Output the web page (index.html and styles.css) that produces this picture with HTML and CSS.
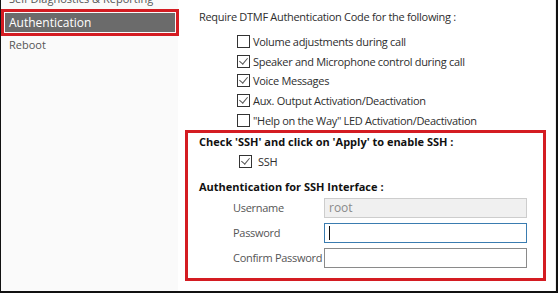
FILE: index.html
```html
<!DOCTYPE html>
<html lang="en">
<head>
  <meta charset="UTF-8" />
  <title>Authentication</title>
  <link rel="stylesheet" href="styles.css">
</head>
<body>
  <div class="frame">
    <ul class="nav">
      <li class="nav-item cut">Self Diagnostics &amp; Reporting</li>
      <li class="nav-item active"><span>Authentication</span></li>
      <li class="nav-item">Reboot</li>
    </ul>

    <div class="main">
      <p class="lead">Require DTMF Authentication Code for the following :</p>
      <ul class="checks">
        <li><span class="box"></span>Volume adjustments during call</li>
        <li><span class="box on"></span>Speaker and Microphone control during call</li>
        <li><span class="box on"></span>Voice Messages</li>
        <li><span class="box on"></span>Aux. Output Activation/Deactivation</li>
        <li><span class="box"></span>"Help on the Way" LED Activation/Deactivation</li>
      </ul>

      <div class="ssh">
        <p class="heading">Check 'SSH' and click on 'Apply' to enable SSH :</p>
        <div class="ssh-check"><span class="box on"></span>SSH</div>
        <p class="heading">Authentication for SSH Interface :</p>
        <div class="fields">
          <label>Username</label>
          <input type="text" value="root" disabled>
          <label>Password</label>
          <div class="input focus"><span class="caret"></span></div>
          <label>Confirm Password</label>
          <input type="text">
        </div>
      </div>
    </div>
  </div>
</body>
</html>
```

FILE: styles.css
```css
*, *::before, *::after { box-sizing: border-box; }
body {
  margin: 0;
  font-family: 'Open Sans', 'Noto Sans', sans-serif;
  font-size: 11px;
  letter-spacing: -0.3px;
  color: #2e2e2e;
  background: #fff;
}
ul, p { margin: 0; padding: 0; list-style: none; }

.frame {
  display: flex;
  width: 558px; height: 293px;
  border-left: 1px solid #111;
  border-right: 2px solid #111;
  border-bottom: 2px solid #111;
  overflow: hidden;
}

/* sidebar */
.nav {
  width: 177px; flex: none;
  background: #fafafa;
  color: #555;
  letter-spacing: 0;
}
.nav-item { height: 20px; line-height: 20px; padding-left: 8px; }
.nav-item.cut { margin-top: -11px; height: 20px; }
.nav-item.active {
  width: 178px; height: 27px;
  padding: 1px;
  border: 3px solid #d41c22;
  line-height: 19px;
}
.nav-item.active span {
  display: block; height: 19px;
  background: #6b6b6b; color: #fff;
  padding-left: 4px;
  font-size: 12px;
}
.nav-item:last-child { line-height: 17px; }

/* content */
.main {
  flex: 1;
  padding: 9px 0 0 21px;
  border-right: 1px solid #ececec;
}
.lead { line-height: 16px; }
.checks { margin: 7px 0 0 38px; }
.checks li { display: flex; align-items: center; height: 19.6px; }
.box {
  width: 13px; height: 13px; flex: none;
  border: 1px solid #333;
  background: #fff;
  margin-right: 3px;
  position: relative;
}
.box.on::after {
  content: '';
  position: absolute; left: 3px; top: 0;
  width: 5px; height: 8px;
  border-right: 1.3px solid #555;
  border-bottom: 1.3px solid #555;
  transform: rotate(40deg);
}

.ssh {
  margin: 0 0 0 -14px;
  width: 361px; height: 151px;
  border: 3px solid #d41c22;
  padding: 1px 0 0 11px;
}
.heading { font-weight: 700; color: #111; line-height: 16px; letter-spacing: 0; }
.ssh-check { display: flex; align-items: center; height: 24px; margin-left: 40px; }
.ssh-check .box { margin-right: 6px; }
.ssh-check + .heading { margin-top: 5px; }

.fields {
  display: grid;
  grid-template-columns: 91px 203px;
  row-gap: 5px;
  margin: 3px 0 0 34px;
  align-items: center;
}
.fields label { color: #555; white-space: nowrap; }
.fields input, .fields .input {
  height: 20px; width: 203px;
  margin: 0; padding: 0 4px;
  border: 1px solid #8a8a8a;
  font: inherit; font-size: 12px;
  background: #fff;
}
.fields input:disabled {
  background: #f0f0f0;
  border-color: #cdcdcd;
  color: #8a8a8a;
}
.fields .input.focus {
  border-color: #3a7cb0;
  display: flex; align-items: center;
}
.caret { width: 1px; height: 14px; background: #111; }
```
